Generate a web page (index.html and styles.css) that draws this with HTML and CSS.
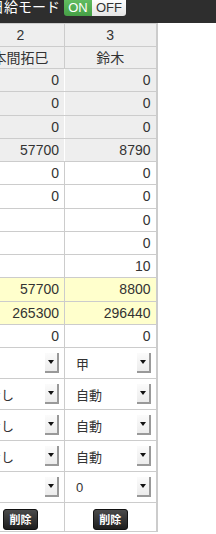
FILE: index.html
```html
<!DOCTYPE html>
<html lang="ja">
<head>
    <meta charset="UTF-8">
    <meta name="viewport" content="width=device-width, initial-scale=1.0">
    <title>日給モード</title>
    <link rel="stylesheet" href="styles.css">
</head>
<body>
    <div class="page">
        <div class="topbar">
            <span class="mode-label">日給モード</span>
            <div class="toggle">
                <span class="toggle-on">ON</span>
                <span class="toggle-off">OFF</span>
            </div>
        </div>

        <table class="staff">
            <colgroup>
                <col class="col-a">
                <col class="col-b">
            </colgroup>
            <thead>
                <tr class="head"><th>2</th><th>3</th></tr>
                <tr class="head"><th>本間拓巳</th><th>鈴木</th></tr>
            </thead>
            <tbody>
                <tr class="num gray"><td>0</td><td>0</td></tr>
                <tr class="num gray"><td>0</td><td>0</td></tr>
                <tr class="num gray"><td>0</td><td>0</td></tr>
                <tr class="num gray"><td>57700</td><td>8790</td></tr>
                <tr class="num"><td>0</td><td>0</td></tr>
                <tr class="num"><td>0</td><td>0</td></tr>
                <tr class="num"><td></td><td>0</td></tr>
                <tr class="num"><td></td><td>0</td></tr>
                <tr class="num"><td></td><td>10</td></tr>
                <tr class="num total"><td>57700</td><td>8800</td></tr>
                <tr class="num total"><td>265300</td><td>296440</td></tr>
                <tr class="num"><td>0</td><td>0</td></tr>

                <!-- selects -->
                <tr class="sel">
                    <td><div class="select"><span></span><span class="arrow"></span></div></td>
                    <td><div class="select"><span>甲</span><span class="arrow"></span></div></td>
                </tr>
                <tr class="sel">
                    <td><div class="select"><span>なし</span><span class="arrow"></span></div></td>
                    <td><div class="select"><span>自動</span><span class="arrow"></span></div></td>
                </tr>
                <tr class="sel">
                    <td><div class="select"><span>なし</span><span class="arrow"></span></div></td>
                    <td><div class="select"><span>自動</span><span class="arrow"></span></div></td>
                </tr>
                <tr class="sel">
                    <td><div class="select"><span>なし</span><span class="arrow"></span></div></td>
                    <td><div class="select"><span>自動</span><span class="arrow"></span></div></td>
                </tr>
                <tr class="sel">
                    <td><div class="select"><span></span><span class="arrow"></span></div></td>
                    <td><div class="select"><span>0</span><span class="arrow"></span></div></td>
                </tr>

                <tr class="del">
                    <td><button class="del-button">削除</button></td>
                    <td><button class="del-button">削除</button></td>
                </tr>
            </tbody>
        </table>
    </div>
</body>
</html>
```

FILE: styles.css
```css
body {
	margin: 0;
	font-family: "Liberation Sans", "Noto Sans CJK JP", sans-serif;
	color: #333;
	background: #fff;
	overflow: hidden;
}

.page {
	margin-left: -24px;
	width: 240px;
}

.topbar {
	background: #2e2e2e;
	height: 23px;
	display: flex;
	align-items: flex-start;
	padding-left: 14px;
}

.mode-label {
	color: #fff;
	font-size: 14px;
	line-height: 14px;
}

.toggle {
	display: flex;
	margin-left: 4px;
	margin-top: -1px;
	height: 17px;
	font-size: 13px;
	line-height: 17px;
}

.toggle-on {
	width: 28px;
	text-align: center;
	color: #fff;
	background: linear-gradient(#62bd62, #46a046);
	border-radius: 0 0 0 3px;
}

.toggle-off {
	width: 34px;
	text-align: center;
	color: #333;
	background: linear-gradient(#fff, #e4e4e4);
	border-radius: 0 0 3px 0;
}

.staff {
	border-collapse: collapse;
	table-layout: fixed;
	width: 180px;
	font-size: 14px;
}

.col-a {
	width: 88px;
}

.col-b {
	width: 92px;
}

.staff th,
.staff td {
	border: 1px solid #ccc;
	padding: 0 5px;
}

.staff th:last-child,
.staff td:last-child {
	border-right: 2px solid #ccc;
}

.head th {
	background: #eee;
	font-weight: normal;
	text-align: center;
	height: 21.5px;
}

.num td {
	height: 22.25px;
	text-align: right;
}

.gray td {
	background: #eee;
}

.gray td:first-child {
	border-right-color: #fff;
}

.total td {
	background: #ffffcc;
}

.sel td {
	height: 30px;
	padding: 0 5px 0 11px;
	font-size: 13px;
}

.select {
	display: flex;
	justify-content: space-between;
	align-items: center;
}

.arrow {
	width: 12px;
	height: 18px;
	background: linear-gradient(#fbfbfb, #ececec);
	border-right: 2px solid #999;
	border-bottom: 2px solid #999;
	display: flex;
	align-items: center;
	justify-content: center;
}

.arrow::after {
	content: "";
	border-left: 3px solid transparent;
	border-right: 3px solid transparent;
	border-top: 4px solid #111;
}

.del td {
	height: 28px;
	text-align: center;
}

.del-button {
	width: 35px;
	height: 21px;
	padding: 0;
	margin-top: 4px;
	font-family: "Noto Sans CJK JP", sans-serif;
	font-size: 11px;
	font-weight: bold;
	color: #fff;
	background: linear-gradient(#4a4a4a, #1e1e1e);
	border: 1px solid #111;
	border-radius: 3px;
}
```
